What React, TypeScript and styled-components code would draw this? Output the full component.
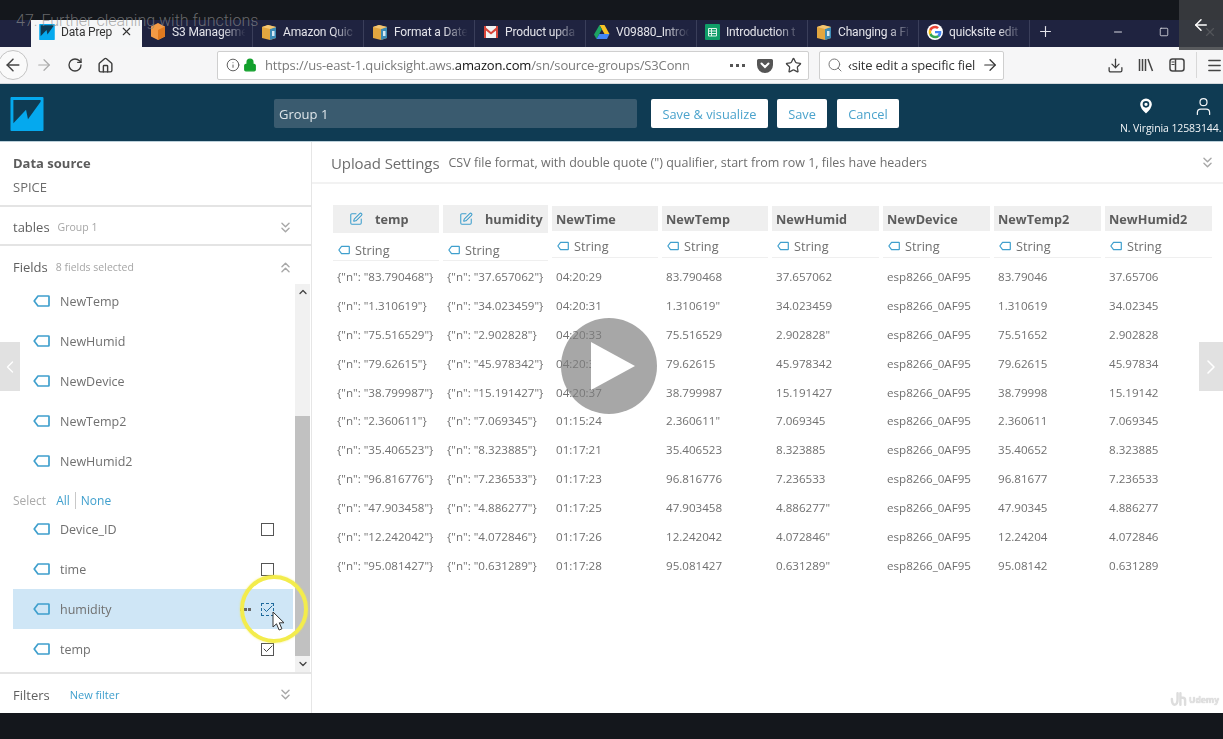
import React from "react";
import styled, { createGlobalStyle } from "styled-components";
import {
  ArrowLeft, ArrowRight, RotateCw, Home, Info, Lock, Star, Search, Download, Menu,
  MapPin, User, X, Plus, Minus, Square, ChevronsDown, ChevronsUp, ChevronUp, ChevronDown,
  ChevronLeft, ChevronRight, SquarePen, Check,
} from "lucide-react";

const Global = createGlobalStyle`
  html, body { margin: 0; padding: 0; background: #14171c; }
  #root { width: 1223px; height: 739px; overflow: hidden; }
  * { box-sizing: border-box; }
`;

const Stage = styled.div`
  position: relative; width: 1223px; height: 739px; overflow: hidden;
  display: flex; flex-direction: column;
  font-family: "Open Sans", "Noto Sans", sans-serif; color: #666; background: #14171c;
`;
const Screen = styled.div`
  flex: 1; min-height: 0; display: flex; flex-direction: column; filter: blur(0.35px);
`;
const TopBar = styled.div`height: 20px; flex: none; background: #14171c;`;
const BottomBar = styled.div`height: 26px; flex: none; background: #14171c;`;

const TabStrip = styled.div`
  height: 27px; flex: none; display: flex; align-items: stretch; padding-left: 31px;
  background: #1f2340; color: #e4e4ea; font-family: Roboto, sans-serif; font-size: 12px;
`;
const Tab = styled.div<{ $active?: boolean }>`
  width: 111px; flex: none; display: flex; align-items: center; gap: 6px; padding: 0 0 4px 8px;
  background: ${(p) => (p.$active ? "#f5f6f7" : "transparent")};
  color: ${(p) => (p.$active ? "#333" : "#e4e4ea")};
  border-right: ${(p) => (p.$active ? "none" : "1px solid #3a3e5a")};
  letter-spacing: -0.15px;
`;
const TabLabel = styled.span<{ $fade?: boolean }>`
  flex: 1; min-width: 0; white-space: nowrap;
  ${(p) => p.$fade && "mask-image: linear-gradient(to right, #000 62%, transparent 92%);"}
`;
const TabClose = styled.span`display: flex; margin-right: 9px; color: #333;`;
const NewTab = styled.div`width: 30px; display: flex; align-items: center; justify-content: center; padding-bottom: 4px;`;
const WindowControls = styled.div`
  margin-left: auto; margin-right: -10px; display: flex; align-items: center; color: #d8d8e0; padding-bottom: 4px;
`;
const WindowBtn = styled.span`width: 46px; display: flex; justify-content: center;`;

const Toolbar = styled.div`
  height: 37px; flex: none; display: flex; align-items: center; background: #f6f6f7;
  border-bottom: 1px solid #d4d8dc; color: #444; font-size: 13px;
`;
const BackCircle = styled.div`
  width: 30px; height: 30px; margin-left: -2px; border-radius: 50%; border: 1px solid #c4c4c4; background: #fafafa;
  display: flex; align-items: center; justify-content: center; flex: none;
`;
const NavIcon = styled.span<{ $dim?: boolean; $w: number }>`
  width: ${(p) => p.$w}px; flex: none; display: flex; justify-content: center;
  color: ${(p) => (p.$dim ? "#aaa" : "#3c3c3c")};
`;
const UrlBar = styled.div`
  margin-left: 97px; width: 592px; height: 29px; flex: none; display: flex; align-items: center;
  background: #fff; border: 1px solid #cfcfcf; border-radius: 2px; padding: 0 6px 0 8px; gap: 3px;
`;
const UrlText = styled.span`
  flex: 1; min-width: 0; margin-left: 5px; white-space: nowrap; color: #7a7a7a; font-size: 13px;
  letter-spacing: -0.15px; mask-image: linear-gradient(to right, #000 90%, transparent 100%);
  b { font-weight: 400; color: #111; }
`;
const Dots = styled.span`
  width: 15px; height: 3px; flex: none; margin-right: 9px; border-top: 3px dotted #555;
`;
const SearchBar = styled.div`
  margin-left: 10px; width: 185px; height: 29px; flex: none; display: flex; align-items: center; gap: 5px;
  background: #fff; border: 1px solid #cfcfcf; border-radius: 2px; padding: 0 4px 0 7px; color: #333;
`;
const SearchText = styled.span`flex: 1; min-width: 0; white-space: nowrap; font-size: 13px; letter-spacing: -0.2px;`;
const ToolRight = styled.div`margin-left: auto; display: flex; align-items: center; color: #444;`;
const ToolSep = styled.span`width: 1px; height: 26px; background: #d8d8d8; margin: 0 9px 0 3px;`;

const AppHeader = styled.header`
  height: 58px; flex: none; display: flex; align-items: center; background: #0f3b53;
  padding: 1px 0 0 10px; box-shadow: inset 0 -1px 0 #bcd0da;
`;
const NameInput = styled.div`
  width: 363px; height: 29px; margin-left: 230px; flex: none; display: flex; align-items: center; padding-left: 5px;
  background: #3a5b6f; border-radius: 2px; color: #dfe6ea; font-size: 13px;
`;
const HeaderBtn = styled.button<{ $w: number; $ml: number }>`
  width: ${(p) => p.$w}px; height: 29px; margin-left: ${(p) => p.$ml}px; flex: none;
  background: #fff; border: none; border-radius: 2px; color: #4ba3cc; font: 400 12.8px "Open Sans", sans-serif; padding: 0;
`;
const Account = styled.div`
  margin-left: auto; width: 103px; height: 100%; flex: none; display: flex; flex-direction: column; color: #f2f5f7;
  font-size: 10.5px; padding-top: 11px; white-space: nowrap;
`;
const AccountIcons = styled.div`display: flex; justify-content: space-between; padding: 0 0 0 16px; height: 22px;`;
const AccountText = styled.div`margin-top: 3px; letter-spacing: -0.1px;`;

const Body = styled.div`flex: 1; min-height: 0; display: flex; background: #fff;`;
const Sidebar = styled.aside`
  width: 312px; flex: none; display: flex; flex-direction: column; border-right: 1px solid #e6e6e6;
`;
const SourceBlock = styled.section`
  height: 65px; flex: none; padding: 12px 0 0 13px; border-bottom: 2px solid #e4e4e4;
`;
const SourceTitle = styled.div`font-size: 13px; font-weight: 700; color: #5c5c5c; line-height: 18px;`;
const SourceValue = styled.div`font-size: 13px; color: #6c6c6c; line-height: 18px; margin-top: 6px;`;
const SectionRow = styled.section<{ $h: number; $pt?: number; $border?: boolean; $top?: boolean }>`
  height: ${(p) => p.$h}px; flex: none; display: flex; align-items: center;
  padding: ${(p) => p.$pt ?? 0}px 17px 0 13px;
  ${(p) => p.$border && "border-bottom: 2px solid #e4e4e4;"}
  ${(p) => p.$top && "border-top: 2px solid #e4e4e4;"}
`;
const SectionName = styled.span`font-size: 13px; color: #5f5f5f;`;
const SectionHint = styled.span<{ $ml: number }>`font-size: 10.5px; color: #a6a6a6; margin-left: ${(p) => p.$ml}px;`;
const SectionLink = styled.span`font-size: 11px; color: #3f9fcd; margin-left: 20px;`;
const SectionEnd = styled.span`margin-left: auto; display: flex; color: #a8a8a8;`;

const FieldsArea = styled.div`flex: 1; min-height: 0; display: flex; padding-left: 13px;`;
const FieldList = styled.div`width: 280px; flex: none; display: flex; flex-direction: column;`;
const FieldRow = styled.div<{ $selected?: boolean }>`
  height: 40px; flex: none; display: flex; align-items: center; padding: 0 19px 0 20px;
  background: ${(p) => (p.$selected ? "#cfe6f6" : "transparent")};
`;
const FieldName = styled.span`margin-left: 10px; font-size: 12.5px; color: #707070;`;
const RowDots = styled.span`
  margin-left: auto; margin-right: 10px; width: 11px; height: 3px; flex: none;
  background: repeating-linear-gradient(to right, #666 0 3px, transparent 3px 4px);
`;
const CheckBox = styled.span<{ $first?: boolean; $active?: boolean }>`
  width: 13px; height: 13px; flex: none; display: flex; align-items: center; justify-content: center;
  border: ${(p) => (p.$active ? "1.6px dashed #1f6a9c" : "1.4px solid #555")};
  color: ${(p) => (p.$active ? "#1f6a9c" : "#444")}; ${(p) => p.$first && "margin-left: auto;"}
`;
const BoxTick = styled(Check)`flex: none; width: 12px; height: 12px;`;
const SelectRow = styled.div`
  height: 28px; flex: none; display: flex; align-items: flex-start; padding-top: 11px; font-size: 12px; line-height: 17px; color: #aaa;
`;
const SelectLink = styled.span<{ $divider?: boolean }>`
  color: #3f9fcd; margin-left: ${(p) => (p.$divider ? 5 : 10)}px;
  ${(p) => p.$divider && "border-left: 1.5px solid #c8c8c8; padding-left: 5px;"}
`;
const Scrollbar = styled.div`
  width: 15px; margin-left: 2px; flex: none; display: flex; flex-direction: column; align-items: center;
  justify-content: space-between; background: #f1f1f1; margin-top: 3px; color: #444;
`;
const Thumb = styled.div`width: 15px; height: 240px; background: #c1c1c1; margin-top: auto;`;
const ScrollEnd = styled.div`height: 16px; flex: none; display: flex; align-items: center; justify-content: center;`;

const Main = styled.main`flex: 1; min-width: 0; display: flex; flex-direction: column;`;
const MainHeader = styled.div`
  height: 42px; flex: none; display: flex; align-items: center; padding: 1px 7px 0 19px; border-bottom: 2px solid #f2f2f2;
`;
const MainTitle = styled.span`font-size: 15px; color: #6e6e6e; letter-spacing: -0.1px;`;
const MainDesc = styled.span`font-size: 12.5px; color: #6e6e6e; margin-left: 9px;`;

const Grid = styled.div`display: flex; padding: 21px 0 0 21px; gap: 4px;`;
const Col = styled.div<{ $w: number }>`width: ${(p) => p.$w}px; flex: none; display: flex; flex-direction: column;`;
const ColHead = styled.div`height: 57px; flex: none; display: flex; flex-direction: column;`;
const ColTitle = styled.div<{ $edit?: boolean }>`
  height: ${(p) => (p.$edit ? 28 : 25)}px; margin-top: ${(p) => (p.$edit ? 0 : 1)}px; flex: none;
  background: #efefef; display: flex; align-items: center; font-size: 12.7px; font-weight: 700; color: #5c5c5c;
  padding-left: ${(p) => (p.$edit ? 16 : 4)}px;
`;
const TitleText = styled.span<{ $ml: number }>`margin-left: ${(p) => p.$ml}px;`;
const ColType = styled.div<{ $edit?: boolean }>`
  height: ${(p) => (p.$edit ? 28 : 27)}px; flex: none; display: flex; align-items: center; gap: 5px;
  padding: ${(p) => (p.$edit ? "7px 0 0 5px" : "4px 0 0 5px")}; border-bottom: 1px solid #efefef;
  font-size: 12.7px; color: #707070;
`;
const Cell = styled.div`height: 28.9px; flex: none; display: flex; align-items: center; padding-left: 4px; font-size: 11.6px; color: #707070; white-space: nowrap;`;

const TitleOverlay = styled.div`
  position: absolute; left: 16px; top: 11px; font: 300 16px Roboto, sans-serif; color: rgba(140,140,140,0.7);
`;
const BackOverlay = styled.div`
  position: absolute; right: 0; top: 0; width: 44px; height: 50px; background: rgba(60,62,66,0.85); color: #fff;
  display: flex; align-items: center; justify-content: center;
`;
const PlayOverlay = styled.div`
  position: absolute; left: 561px; top: 318px; width: 96px; height: 96px; border-radius: 50%;
  background: rgba(125,125,125,0.68); display: flex; align-items: center; justify-content: center;
`;
const SideArrow = styled.div<{ $left: number; $w: number }>`
  position: absolute; left: ${(p) => p.$left}px; top: 342px; width: ${(p) => p.$w}px; height: 49px; background: rgba(205,205,205,0.6); color: #fff;
  display: flex; align-items: center; justify-content: center;
`;
const Spot = styled.div`
  position: absolute; left: 240px; top: 575px; width: 68px; height: 68px; border-radius: 50%;
  border: 4px solid #f3ec4c; box-shadow: 0 0 2px rgba(242,234,68,0.7);
`;
const Pointer = styled.svg`position: absolute; left: 272px; top: 611px;`;
const Mark = styled.div`
  position: absolute; left: 1170px; top: 690px; display: flex; align-items: center; gap: 2px; color: #e2e2e2;
  font: 700 8.5px "Open Sans", sans-serif; filter: blur(0.7px); text-shadow: 0 0 1px #bbb;
`;

const QuickIcon = ({ s = 16 }: { s?: number }) => (
  <svg width={s} height={s} viewBox="0 0 34 35" style={{ flex: "none" }}>
    <rect width="34" height="35" rx="1" fill="#05a9ee" />
    <path d="M3 3H31V5L18 23 16 13 3 27Z" fill="#0f3b53" />
  </svg>
);
const S3Icon = () => (
  <svg width="16" height="17" viewBox="0 0 16 17" style={{ flex: "none" }}>
    <path d="M8 0l7 3.500v10L8 17 1 13.500v-10z" fill="#f39a45" /><path d="M8 7l7-3.500v10L8 17z" fill="#e07a20" />
  </svg>
);
const BoxIcon = () => (
  <svg width="16" height="16" viewBox="0 0 16 16" style={{ flex: "none" }}>
    <path d="M1 3l6-2 8 2v11l-6 2-8-2z" fill="#e2a63f" /><path d="M9 5l6-2v11l-6 2z" fill="#3d8bb5" />
    <path d="M1 3l8 2 6-2-8-2z" fill="#f4c673" /><rect x="11" y="7" width="2.500" height="5" fill="#d6eaf4" />
  </svg>
);
const GmailIcon = () => (
  <svg width="14" height="12" viewBox="0 0 14 12" style={{ flex: "none", margin: "0 1px" }}>
    <rect width="14" height="12" fill="#f3f3f3" /><path d="M0 0l7 6 7-6v3L7 8.500 0 3z" fill="#d8453a" />
    <rect y="0" width="2" height="12" fill="#d8453a" /><rect x="12" width="2" height="12" fill="#d8453a" />
  </svg>
);
const DriveIcon = () => (
  <svg width="16" height="14" viewBox="0 0 16 14" style={{ flex: "none" }}>
    <path d="M5.500 0h5l5 9h-5z" fill="#f7c324" /><path d="M5.500 0L0 9.500 2.500 14l5.300-9.500z" fill="#1da362" />
    <path d="M2.500 14h10.500l2.500-5H5.300z" fill="#4285f4" />
  </svg>
);
const SheetIcon = () => (
  <svg width="15" height="16" viewBox="0 0 15 16" style={{ flex: "none" }}>
    <rect width="15" height="16" rx="1" fill="#0f9d68" />
    <path d="M3.500 4.500h8v7.500h-8zM3.500 7h8M3.500 9.500h8M6.500 4.500v7.500" fill="none" stroke="#dff3ea" strokeWidth="1" />
  </svg>
);
const GoogleIcon = () => (
  <svg width="16" height="16" viewBox="0 0 48 48" style={{ flex: "none" }}>
    <circle cx="24" cy="24" r="24" fill="#fff" />
    <path d="M43 24.500c0-1.400-.1-2.400-.3-3.500H24v7h10.800c-.5 2.500-1.900 4.500-4 5.900l6.300 4.900C41 35.200 43 30.300 43 24.500z" fill="#4285f4" />
    <path d="M24 43c5.300 0 9.700-1.700 13-4.700l-6.300-4.900c-1.700 1.200-4 2-6.700 2-5.100 0-9.500-3.500-11-8.100l-6.500 5C9.700 38.600 16.300 43 24 43z" fill="#34a853" />
    <path d="M13 27.300c-.4-1.200-.6-2.400-.6-3.300s.2-2.200.6-3.300l-6.500-5C5.500 18 5 21 5 24s.5 6 1.500 8.300z" fill="#fbbc05" />
    <path d="M24 12.600c3 0 5.200 1.300 6.400 2.400l5.500-5.400C33.300 7 29.300 5 24 5 16.300 5 9.700 9.400 6.500 15.700l6.500 5c1.500-4.600 5.900-8.100 11-8.100z" fill="#ea4335" />
  </svg>
);
const TagIcon = ({ w = 17, h = 12 }: { w?: number; h?: number }) => (
  <svg width={w} height={h} viewBox="0 0 17 12" style={{ flex: "none" }}>
    <path d="M5 1h10.500a.500.500 0 0 1 .5.500v9a.500.500 0 0 1-.5.500H5L1.200 6z" fill="none" stroke="#3f9fcd" strokeWidth="1.700" strokeLinejoin="round" />
  </svg>
);
const LibraryIcon = () => (
  <svg width="16" height="16" viewBox="0 0 16 16" fill="none" stroke="#444" strokeWidth="1.500">
    <path d="M1.500 2v12M4.500 2v12M7.500 2v12M10 2l4.500 12" />
  </svg>
);
const SidebarIcon = () => (
  <svg width="16" height="16" viewBox="0 0 16 16" fill="none" stroke="#444" strokeWidth="1.500">
    <rect x="1" y="2" width="14" height="12" rx="2.500" /><path d="M6.500 2v12" /><path d="M2.500 5h3M2.500 7.500h3" strokeWidth="1" />
  </svg>
);
const PocketIcon = () => (
  <svg width="16" height="15" viewBox="0 0 16 15" style={{ flex: "none" }}>
    <path d="M1.500 1h13A1.500 1.500 0 0 1 16 2.500V7a8 8 0 0 1-16 0V2.500A1.500 1.500 0 0 1 1.500 1z" fill="#555" />
    <path d="M4.500 5.500L8 9l3.500-3.500" fill="none" stroke="#fff" strokeWidth="2" strokeLinecap="round" />
  </svg>
);

const tabs: { label: string; icon: React.ReactNode }[] = [
  { label: "S3 Manageme", icon: <S3Icon /> },
  { label: "Amazon Quic", icon: <BoxIcon /> },
  { label: "Format a Date", icon: <BoxIcon /> },
  { label: "Product upda", icon: <GmailIcon /> },
  { label: "V09880_Introd", icon: <DriveIcon /> },
  { label: "Introduction t", icon: <SheetIcon /> },
  { label: "Changing a Fi", icon: <BoxIcon /> },
  { label: "quicksite edit", icon: <GoogleIcon /> },
];

const upperFields = ["NewTemp", "NewHumid", "NewDevice", "NewTemp2", "NewHumid2"];
const lowerFields = [
  { name: "Device_ID", on: false },
  { name: "time", on: false },
  { name: "humidity", on: true, selected: true },
  { name: "temp", on: true },
];

const temp = ["83.790468", "1.310619", "75.516529", "79.62615", "38.799987", "2.360611", "35.406523", "96.816776", "47.903458", "12.242042", "95.081427"];
const humid = ["37.657062", "34.023459", "2.902828", "45.978342", "15.191427", "7.069345", "8.323885", "7.236533", "4.886277", "4.072846", "0.631289"];
const wrap = (v: string) => `{"n": "${v}"}`;

const columns: { name: string; w: number; edit?: boolean; ml?: number; cells: string[] }[] = [
  { name: "temp", w: 106, edit: true, ml: 12, cells: temp.map(wrap) },
  { name: "humidity", w: 105, edit: true, ml: 12, cells: humid.map(wrap) },
  { name: "NewTime", w: 106, cells: ["04:20:29", "04:20:31", "04:20:33", "04:20:35", "04:20:37", "01:15:24", "01:17:21", "01:17:23", "01:17:25", "01:17:26", "01:17:28"] },
  { name: "NewTemp", w: 106, cells: ["83.790468", '1.310619"', "75.516529", "79.62615", "38.799987", '2.360611"', "35.406523", "96.816776", "47.903458", "12.242042", "95.081427"] },
  { name: "NewHumid", w: 107, cells: ["37.657062", "34.023459", '2.902828"', "45.978342", "15.191427", "7.069345", "8.323885", "7.236533", '4.886277"', '4.072846"', '0.631289"'] },
  { name: "NewDevice", w: 107, cells: Array(11).fill("esp8266_0AF95") },
  { name: "NewTemp2", w: 107, cells: ["83.79046", "1.310619", "75.51652", "79.62615", "38.79998", "2.360611", "35.40652", "96.81677", "47.90345", "12.24204", "95.08142"] },
  { name: "NewHumid2", w: 107, cells: ["37.65706", "34.02345", "2.902828", "45.97834", "15.19142", "7.069345", "8.323885", "7.236533", "4.886277", "4.072846", "0.631289"] },
];

export default function App() {
  return (
    <Stage>
      <Global />
      <Screen>
        <TopBar />
        <TabStrip>
          <Tab $active>
            <QuickIcon />
            <TabLabel>Data Prep</TabLabel>
            <TabClose><X size={13} strokeWidth={2} /></TabClose>
          </Tab>
          {tabs.map((t) => (
            <Tab key={t.label}>{t.icon}<TabLabel $fade>{t.label}</TabLabel></Tab>
          ))}
          <NewTab><Plus size={17} strokeWidth={1.6} /></NewTab>
          <WindowControls>
            <WindowBtn><Minus size={12} /></WindowBtn>
            <WindowBtn><Square size={10} /></WindowBtn>
            <WindowBtn><X size={14} /></WindowBtn>
          </WindowControls>
        </TabStrip>
        <Toolbar>
          <BackCircle><ArrowLeft size={20} strokeWidth={1.8} /></BackCircle>
          <NavIcon $w={32} $dim><ArrowRight size={18} strokeWidth={1.6} /></NavIcon>
          <NavIcon $w={30}><RotateCw size={16} strokeWidth={2} /></NavIcon>
          <NavIcon $w={30}><Home size={17} strokeWidth={2} /></NavIcon>
          <UrlBar>
            <Info size={14} strokeWidth={1.6} color="#555" />
            <Lock size={14} strokeWidth={2.2} color="#12a02c" fill="#12a02c" />
            <UrlText>https://us-east-1.quicksight.aws.<b>amazon.com</b>/sn/source-groups/S3Conn</UrlText>
            <Dots />
            <PocketIcon />
            <Star size={17} strokeWidth={1.8} color="#444" style={{ marginLeft: 9 }} />
          </UrlBar>
          <SearchBar>
            <Search size={16} strokeWidth={1.5} color="#777" />
            <SearchText>‹site edit a specific fiel</SearchText>
            <ArrowRight size={18} strokeWidth={1.6} />
          </SearchBar>
          <ToolRight>
            <NavIcon $w={32}><Download size={17} strokeWidth={1.8} /></NavIcon>
            <NavIcon $w={30}><LibraryIcon /></NavIcon>
            <NavIcon $w={32}><SidebarIcon /></NavIcon>
            <ToolSep />
            <Menu size={17} strokeWidth={2} style={{ flex: "none", width: 17 }} />
          </ToolRight>
        </Toolbar>
        <AppHeader>
          <QuickIcon s={34} />
          <NameInput>Group 1</NameInput>
          <HeaderBtn $w={117} $ml={14}>Save &amp; visualize</HeaderBtn>
          <HeaderBtn $w={50} $ml={9}>Save</HeaderBtn>
          <HeaderBtn $w={62} $ml={10}>Cancel</HeaderBtn>
          <Account>
            <AccountIcons>
              <MapPin size={20} fill="#fff" color="#0f3b53" strokeWidth={2} />
              <User size={21} strokeWidth={1.4} style={{ marginRight: 9 }} />
            </AccountIcons>
            <AccountText>N. Virginia 12583144.</AccountText>
          </Account>
        </AppHeader>
        <Body>
          <Sidebar>
            <SourceBlock>
              <SourceTitle>Data source</SourceTitle>
              <SourceValue>SPICE</SourceValue>
            </SourceBlock>
            <SectionRow $h={39} $pt={3} $border>
              <SectionName>tables</SectionName>
              <SectionHint $ml={8}>Group 1</SectionHint>
              <SectionEnd><ChevronsDown size={17} /></SectionEnd>
            </SectionRow>
            <SectionRow $h={35} $pt={7}>
              <SectionName>Fields</SectionName>
              <SectionHint $ml={8}>8 fields selected</SectionHint>
              <SectionEnd><ChevronsUp size={17} /></SectionEnd>
            </SectionRow>
            <FieldsArea>
              <FieldList>
                {upperFields.map((f) => (
                  <FieldRow key={f}><TagIcon /><FieldName>{f}</FieldName></FieldRow>
                ))}
                <SelectRow>
                  Select<SelectLink>All</SelectLink><SelectLink $divider>None</SelectLink>
                </SelectRow>
                {lowerFields.map((f) => (
                  <FieldRow key={f.name} $selected={f.selected}>
                    <TagIcon /><FieldName>{f.name}</FieldName>
                    {f.selected && <RowDots />}
                    <CheckBox $first={!f.selected} $active={f.selected}>{f.on && <BoxTick strokeWidth={2} />}</CheckBox>
                  </FieldRow>
                ))}
              </FieldList>
              <Scrollbar>
                <ScrollEnd><ChevronUp size={12} strokeWidth={2.6} /></ScrollEnd>
                <Thumb />
                <ScrollEnd><ChevronDown size={12} strokeWidth={2.6} /></ScrollEnd>
              </Scrollbar>
            </FieldsArea>
            <SectionRow $h={41} $pt={2} $top>
              <SectionName>Filters</SectionName>
              <SectionLink>New filter</SectionLink>
              <SectionEnd><ChevronsDown size={17} /></SectionEnd>
            </SectionRow>
          </Sidebar>
          <Main>
            <MainHeader>
              <MainTitle>Upload Settings</MainTitle>
              <MainDesc>CSV file format, with double quote (") qualifier, start from row 1, files have headers</MainDesc>
              <SectionEnd><ChevronsDown size={17} /></SectionEnd>
            </MainHeader>
            <Grid>
              {columns.map((c) => (
                <Col key={c.name} $w={c.w}>
                  <ColHead>
                    <ColTitle $edit={c.edit}>
                      {c.edit && <SquarePen size={14} color="#3f9fcd" strokeWidth={1.8} />}
                      <TitleText $ml={c.ml ?? 0}>{c.name}</TitleText>
                    </ColTitle>
                    <ColType $edit={c.edit}><TagIcon w={12} h={10} />String</ColType>
                  </ColHead>
                  {c.cells.map((v, i) => <Cell key={i}>{v}</Cell>)}
                </Col>
              ))}
            </Grid>
          </Main>
        </Body>
        <BottomBar />
      </Screen>

      <TitleOverlay>47. Further cleaning with functions</TitleOverlay>
      <BackOverlay><ArrowLeft size={18} strokeWidth={2} /></BackOverlay>
      <SideArrow $left={0} $w={20}><ChevronLeft size={26} strokeWidth={1.6} /></SideArrow>
      <SideArrow $left={1199} $w={24}><ChevronRight size={26} strokeWidth={1.6} /></SideArrow>
      <PlayOverlay>
        <svg width="44" height="48" viewBox="0 0 44 48" style={{ marginLeft: 8 }}><path d="M0 0L44 24 0 48z" fill="#fff" /></svg>
      </PlayOverlay>
      <Spot />
      <Pointer width="14" height="21" viewBox="0 0 14 21">
        <path d="M1 1v15l3.500-3.200 2.600 6.200 2.800-1.200-2.600-6h4.700z" fill="#fff" stroke="#333" strokeWidth="1" />
      </Pointer>
      <Mark>
        <svg width="17" height="18" viewBox="0 0 18 18" fill="none" stroke="#ddd" strokeWidth="2.600" strokeLinecap="round">
          <path d="M2 9c0 4 1 6 3 6s3-2 3-6V3M11 3v12M11 9c0-2 5-2 5 1v5" />
        </svg>
        Udemy
      </Mark>
    </Stage>
  );
}
